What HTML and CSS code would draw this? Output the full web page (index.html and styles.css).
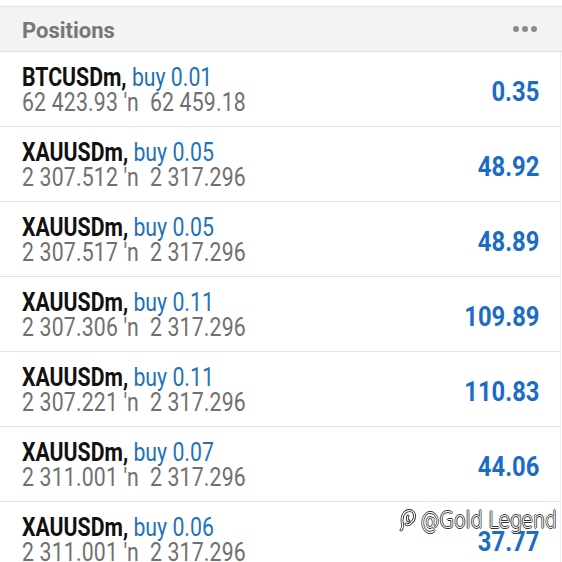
FILE: index.html
```html
<!DOCTYPE html>
<html lang="en">
<head>
    <meta charset="UTF-8">
    <meta name="viewport" content="width=device-width, initial-scale=1.0">
    <title>Positions</title>
    <link rel="stylesheet" href="styles.css">
</head>
<body>
    <div class="header">
        <span class="title">Positions</span>
        <div class="dots"><i></i><i></i><i></i></div>
    </div>
    <div class="list">
        <div class="row">
            <div class="info">
                <div class="line1"><span class="sq"><b>BTCUSDm,</b> <span class="buy">buy 0.01</span></span></div>
                <div class="line2"><span class="sq">62 423.93 ′n&nbsp; 62 459.18</span></div>
            </div>
            <div class="profit"><span class="sq sq-r">0.35</span></div>
        </div>
        <div class="row">
            <div class="info">
                <div class="line1"><span class="sq"><b>XAUUSDm,</b> <span class="buy">buy 0.05</span></span></div>
                <div class="line2"><span class="sq">2 307.512 ′n&nbsp; 2 317.296</span></div>
            </div>
            <div class="profit"><span class="sq sq-r">48.92</span></div>
        </div>
        <div class="row">
            <div class="info">
                <div class="line1"><span class="sq"><b>XAUUSDm,</b> <span class="buy">buy 0.05</span></span></div>
                <div class="line2"><span class="sq">2 307.517 ′n&nbsp; 2 317.296</span></div>
            </div>
            <div class="profit"><span class="sq sq-r">48.89</span></div>
        </div>
        <div class="row">
            <div class="info">
                <div class="line1"><span class="sq"><b>XAUUSDm,</b> <span class="buy">buy 0.11</span></span></div>
                <div class="line2"><span class="sq">2 307.306 ′n&nbsp; 2 317.296</span></div>
            </div>
            <div class="profit"><span class="sq sq-r">109.89</span></div>
        </div>
        <div class="row">
            <div class="info">
                <div class="line1"><span class="sq"><b>XAUUSDm,</b> <span class="buy">buy 0.11</span></span></div>
                <div class="line2"><span class="sq">2 307.221 ′n&nbsp; 2 317.296</span></div>
            </div>
            <div class="profit"><span class="sq sq-r">110.83</span></div>
        </div>
        <div class="row">
            <div class="info">
                <div class="line1"><span class="sq"><b>XAUUSDm,</b> <span class="buy">buy 0.07</span></span></div>
                <div class="line2"><span class="sq">2 311.001 ′n&nbsp; 2 317.296</span></div>
            </div>
            <div class="profit"><span class="sq sq-r">44.06</span></div>
        </div>
        <div class="row">
            <div class="info">
                <div class="line1"><span class="sq"><b>XAUUSDm,</b> <span class="buy">buy 0.06</span></span></div>
                <div class="line2"><span class="sq">2 311.001 ′n&nbsp; 2 317.296</span></div>
            </div>
            <div class="profit"><span class="sq sq-r">37.77</span></div>
        </div>
    </div>
    <div class="watermark">
        <svg width="20" height="24" viewBox="0 0 20 24">
            <path d="M14 3 C8 1 4 6 4 12 C4 16 6 19 3 22 M14 3 C18 6 17 12 13 15 C11 17 9 17 8 16 M10 8 C9 10 9 13 11 13" fill="none" stroke="#222" stroke-width="2.8" stroke-linecap="round"/>
            <path d="M14 3 C8 1 4 6 4 12 C4 16 6 19 3 22 M14 3 C18 6 17 12 13 15 C11 17 9 17 8 16 M10 8 C9 10 9 13 11 13" fill="none" stroke="#fff" stroke-width="1.2" stroke-linecap="round"/>
        </svg>
        <span class="sq wm-text">@Gold Legend</span>
    </div>
</body>
</html>
```

FILE: styles.css
```css
body {
    margin: 0;
    font-family: Roboto, "Liberation Sans", sans-serif;
    background: #fff;
    position: relative;
    height: 562px;
    overflow: hidden;
}
.sq {
    display: inline-block;
    white-space: nowrap;
    transform: scaleX(0.85);
    transform-origin: left center;
}
.sq-r { transform-origin: right center; }
.header {
    margin-top: 6px;
    height: 44px;
    background: #f3f3f3;
    border-top: 1px solid #e6e6e6;
    border-bottom: 1px solid #dedede;
    display: flex;
    align-items: center;
    justify-content: space-between;
    padding: 0 25px 0 22px;
}
.title {
    font-size: 22px;
    font-weight: bold;
    color: #777;
    padding-top: 2px;
}
.dots { display: flex; gap: 3px; }
.dots i {
    width: 6px;
    height: 6px;
    border-radius: 50%;
    background: #8a8a8a;
}
.list {
    width: 560px;
    border-right: 1px solid #f0f0f0;
}
.row {
    height: 74px;
    border-bottom: 1px solid #e2e2e2;
    display: flex;
    align-items: center;
    justify-content: space-between;
    padding: 0 21px 0 22px;
}
.info { padding-top: 2px; }
.line1 {
    font-size: 25px;
    line-height: 25px;
    color: #111;
}
.line1 b { font-weight: bold; }
.buy { color: #1f72b8; }
.line2 {
    font-size: 25px;
    line-height: 25px;
    color: #707070;
    letter-spacing: 0.2px;
}
.profit {
    font-size: 28px;
    font-weight: bold;
    color: #1a6cc4;
    padding-top: 4px;
}
.watermark {
    position: absolute;
    left: 398px;
    top: 507px;
    display: flex;
    align-items: center;
    gap: 2px;
}
.wm-text {
    font-family: "DejaVu Sans", sans-serif;
    font-size: 23px;
    font-weight: 200;
    color: #fff;
    letter-spacing: -0.5px;
    text-shadow: 1px 0 0 #333, -1px 0 0 #333, 0 1px 0 #333, 0 -1px 0 #333;
}
```
